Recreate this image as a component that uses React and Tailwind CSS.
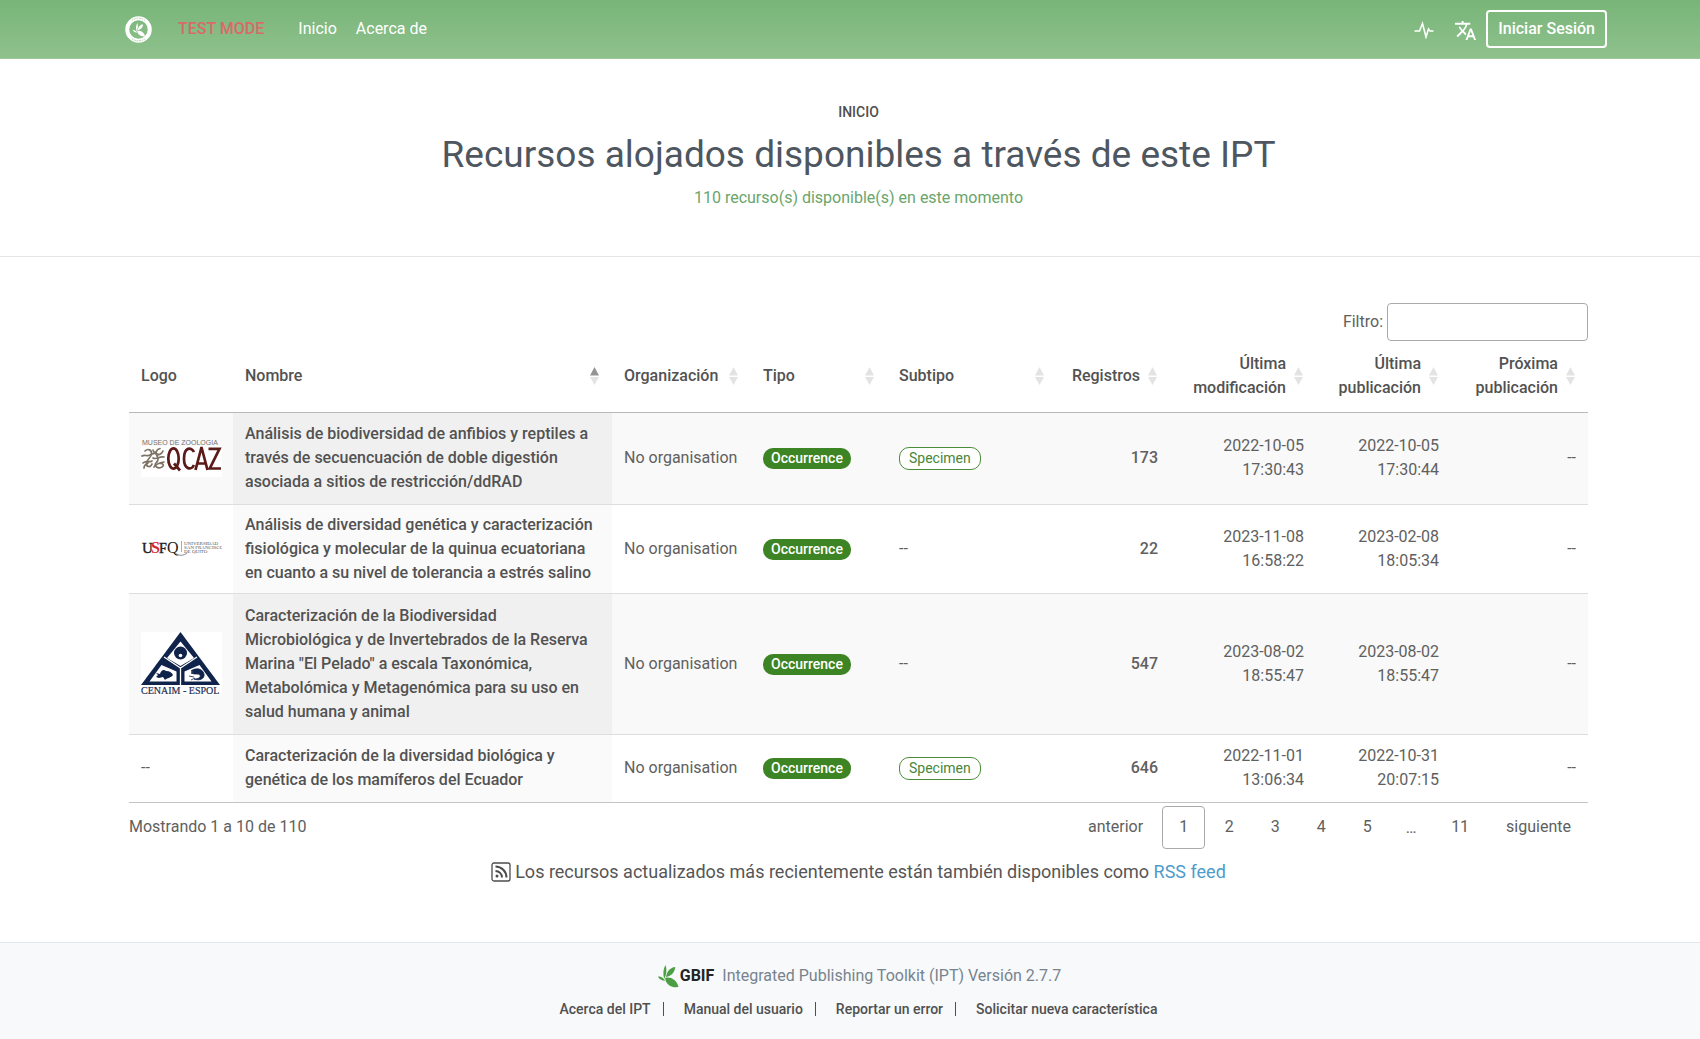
import React from "react";
import { MdTranslate } from "react-icons/md";

const leaf = (
  <>
    <path d="M8.500 1C6 5 5.500 10 7 15.500 9.500 11.500 10 6 8.500 1Z" />
    <path d="M18.500 3C13.500 3.500 9.500 7.500 9 13.500 14.500 12.500 18 8.500 18.500 3Z" />
    <path d="M0.500 13C3 12.500 6 14 8.200 17.500 5 17.500 2 16 0.500 13Z" />
    <path d="M8 14.500C13.500 13 20.500 16.500 21.800 24 15 25 8.500 21.500 8 14.500Z" />
  </>
);

function SiteLogo() {
  return (
    <svg viewBox="0 0 54 54" className="h-[27px] w-[27px]" aria-label="IPT">
      <circle cx="27" cy="27" r="22.500" fill="none" stroke="#fff" strokeWidth="8" />
      <path d="M14 8.500A22.500 22.500 0 0 1 40 8.500M14 45.500A22.500 22.500 0 0 0 40 45.500" fill="none" stroke="#a5cda4" strokeWidth="2" strokeDasharray="3 2" />
      <g fill="#fff" transform="translate(15 13) scale(1.150)">{leaf}</g>
    </svg>
  );
}

function QcazLogo() {
  return (
    <svg viewBox="0 0 81 38" className="h-[38px] w-[81px]" fontFamily="'Liberation Sans', sans-serif">
      <rect y="7" width="81" height="31" fill="#fff" />
      <text x="1" y="6" fontSize="7" fill="#77706a">MUSEO DE ZOOLOGIA</text>
      <g fill="none" stroke="#7d7364" strokeWidth="1.700" strokeLinecap="round">
        <path d="M4 12c3-3 7-1 6.500 3S6 20 5.500 24s4 5 5.500 1" />
        <path d="M1 17c3-2 5 1 8-1s5-1 6-3M2 24c3-3 6 0 9-2M3 29c0-3 2-4 4-5" />
        <path d="M19 9.500c-4 1-5 5-3 7.500s1 5-1 7 1 6 5 4.500 2-5-1-4" />
        <path d="M12 19c4 2 6-2 11-1M13 28c2-3 4-4 10-5M22 12c-1 3-3 3-5 4M12 11c1 3 3 4 5 4" />
      </g>
      <g fill="none" stroke="#5c1a18" strokeWidth="2.700">
        <ellipse cx="32.500" cy="19.500" rx="5.200" ry="10.200" />
        <path d="M33 24.500l6 7M53 13C50.500 7.500 43 8 43 19.500s7.500 12 10 6.500M54.500 31L60.300 9h.4L66.500 31M56.500 24.500h8M67.500 9.800h11L68.800 29.500h11.200" />
      </g>
    </svg>
  );
}

function UsfqLogo() {
  return (
    <svg viewBox="0 0 81 18" className="h-[18px] w-[81px]" fontFamily="'Liberation Serif', serif">
      <text x="1" y="13" fontSize="15" fill="#222" stroke="#222" strokeWidth="0.400">U</text>
      <text x="10" y="13" fontSize="16" fontWeight="bold" fill="#dc2630">S</text>
      <text x="18" y="13" fontSize="14" fill="#222" stroke="#222" strokeWidth="0.400">F</text>
      <text x="26" y="13" fontSize="16" fill="#222">Q</text>
      <path d="M34 13c3 3 9 3 12 0" stroke="#8a8a8a" fill="none" />
      <path d="M40.500 1v11" stroke="#c9a0a0" fill="none" />
      <g fontSize="5" fill="#555">
        <text x="43" y="5">UNIVERSIDAD</text>
        <text x="43" y="9">SAN FRANCISCO</text>
        <text x="43" y="13">DE QUITO</text>
      </g>
    </svg>
  );
}

function CenaimLogo() {
  return (
    <svg viewBox="0 0 81 63" className="h-[63px] w-[81px]">
      <rect width="81" height="63" fill="#fff" />
      <path d="M39.500 0L79 53H0Z" fill="#10234a" />
      <path d="M39.500 36v17M39.500 36L23 25M39.500 36L56 25" stroke="#fff" strokeWidth="1.300" />
      <g fill="#fff">
        <path d="M39.500 9.500L53 26 39.500 34 26 26Z" />
        <path d="M20.500 33L35.500 39.500V49.500H8.500Z" />
        <path d="M58.500 33L43.500 39.500V49.500H70.500Z" />
      </g>
      <circle cx="39.500" cy="21" r="6.500" fill="#10234a" />
      <circle cx="39.500" cy="23.500" r="1.800" fill="#fff" />
      <path d="M15 41l4 1c1-4 4-5 6-3 4 0 6 2 7 4-2 3-6 3-8 5l-2-3-4 1-3-1 2-2Z" fill="#10234a" />
      <path d="M50 39c5-4 12-2 13 3s-5 7-10 5c5 0 7-2 6-4s-5 0-9-2l3-1ZM48 44l5 1M50 48l4-2" fill="#10234a" stroke="#10234a" strokeWidth="0.800" />
      <text x="0" y="62" fontSize="10" fontFamily="'Liberation Serif', serif" fill="#222e50" stroke="#222e50" strokeWidth="0.200">CENAIM - ESPOL</text>
    </svg>
  );
}

function SortArrows({ active }) {
  return (
    <svg viewBox="0 0 9 18" className="h-[18px] w-[9px] shrink-0" aria-hidden="true">
      <path d="M4.500 0L9 8.500H0Z" fill={active ? "#929496" : "#e3e3e3"} />
      <path d="M0 10h9L4.500 18Z" fill="#e3e3e3" />
    </svg>
  );
}

const columns = [
  { lines: ["Nombre"], active: true },
  { lines: ["Organización"] },
  { lines: ["Tipo"] },
  { lines: ["Subtipo"] },
  { lines: ["Registros"], right: true },
  { lines: ["Última", "modificación"], right: true },
  { lines: ["Última", "publicación"], right: true },
  { lines: ["Próxima", "publicación"], right: true },
];

const rows = [
  {
    logo: <QcazLogo />,
    name: "Análisis de biodiversidad de anfibios y reptiles a través de secuencuación de doble digestión asociada a sitios de restricción/ddRAD",
    subtype: "Specimen",
    records: "173",
    modified: ["2022-10-05", "17:30:43"],
    published: ["2022-10-05", "17:30:44"],
    height: "h-[92px]",
  },
  {
    logo: <UsfqLogo />,
    name: "Análisis de diversidad genética y caracterización fisiológica y molecular de la quinua ecuatoriana en cuanto a su nivel de tolerancia a estrés salino",
    records: "22",
    modified: ["2023-11-08", "16:58:22"],
    published: ["2023-02-08", "18:05:34"],
    height: "h-[89px]",
  },
  {
    logo: <CenaimLogo />,
    name: 'Caracterización de la Biodiversidad Microbiológica y de Invertebrados de la Reserva Marina "El Pelado" a escala Taxonómica, Metabolómica y Metagenómica para su uso en salud humana y animal',
    records: "547",
    modified: ["2023-08-02", "18:55:47"],
    published: ["2023-08-02", "18:55:47"],
    height: "h-[141px]",
  },
  {
    name: "Caracterización de la diversidad biológica y genética de los mamíferos del Ecuador",
    subtype: "Specimen",
    records: "646",
    modified: ["2022-11-01", "13:06:34"],
    published: ["2022-10-31", "20:07:15"],
    height: "h-[68px]",
  },
];

const footerLinks = ["Acerca del IPT", "Manual del usuario", "Reportar un error", "Solicitar nueva característica"];

function Stamp({ value }) {
  return (
    <td className="pr-3 text-right">
      {value[0]}
      <br />
      {value[1]}
    </td>
  );
}

export default function App() {
  return (
    <div className="flex min-h-screen flex-col bg-white font-['Roboto',sans-serif] text-base leading-6 text-[#4e565f]">
      <header className="border-b border-[#9bc99a] bg-linear-to-b from-[#78b578] to-[#8fc18d] pr-[93px] pl-[125px] text-white">
        <div className="flex h-[58px] items-center">
          <a href="#inicio"><SiteLogo /></a>
          <span className="ml-[26px] font-medium text-[#d9696a]">TEST MODE</span>
          <nav className="ml-[34px] flex gap-[19px]">
            <a href="#inicio">Inicio</a>
            <a href="#acerca">Acerca de</a>
          </nav>
          <div className="ml-auto flex items-center">
            <button aria-label="Estado" className="mr-5 pt-0.5">
              <svg viewBox="0 0 20 18" className="h-[18px] w-5" fill="none" stroke="#fff" strokeWidth="1.600">
                <path d="M0.500 10h5l3-7.500 3.500 13.500 2.500-8 1.500 2H19.500" />
              </svg>
            </button>
            <button aria-label="Idioma" className="mr-[9px] pt-0.5"><MdTranslate size={23} /></button>
            <button className="h-[38px] rounded border-2 border-white px-2.5 font-medium">Iniciar Sesión</button>
          </div>
        </div>
      </header>

      <section className="border-b border-[#e3e5e7] pt-[43px] pb-[46px] pl-[17px] text-center">
        <p className="text-sm leading-5 font-medium text-[#4f4f4f]">INICIO</p>
        <h1 className="mt-2.5 text-[37px] leading-[46px] text-[#4e565f]">Recursos alojados disponibles a través de este IPT</h1>
        <p className="mt-2 text-[#6aa56a]">110 recurso(s) disponible(s) en este momento</p>
      </section>

      <main className="grow pt-[46px] pr-28 pl-[129px] text-[#606060]">
        <div className="flex items-center justify-end gap-1">
          <label htmlFor="filtro">Filtro:</label>
          <input id="filtro" type="text" className="h-[38px] w-[201px] rounded border border-[#aaa] bg-white px-2" />
        </div>

        <table className="w-full table-fixed border-collapse">
          <colgroup>
            <col className="w-[104px]" />
            <col className="w-[379px]" />
            <col className="w-[139px]" />
            <col className="w-[136px]" />
            <col className="w-[170px]" />
            <col className="w-[113px]" />
            <col className="w-[146px]" />
            <col className="w-[135px]" />
            <col />
          </colgroup>
          <thead>
            <tr className="h-[71px] border-b border-[#b9b9b9] text-left text-[#525252]">
              <th className="pl-3 font-medium">Logo</th>
              {columns.map((c, i) => (
                <th key={i} className="pr-[13px] pl-3 font-medium">
                  <span className={c.right ? "flex items-center justify-end gap-2" : "flex items-center justify-between"}>
                    <span className={c.right ? "text-right" : ""}>
                      {c.lines.map((l) => <span key={l} className="block">{l}</span>)}
                    </span>
                    <SortArrows active={c.active} />
                  </span>
                </th>
              ))}
            </tr>
          </thead>
          <tbody>
            {rows.map((r, i) => (
              <tr key={i} className={`${r.height} ${i % 2 ? "bg-white" : "bg-[#f9f9f9]"} border-b ${i === 3 ? "border-[#c4c4c4]" : "border-[#dedede]"}`}>
                <td className="pl-3">{r.logo || "--"}</td>
                <td className={`${i % 2 ? "bg-[#fafafa]" : "bg-[#f0f0f0]"} pr-3 pl-3`}>
                  <a href="#recurso" className="font-medium text-[#525252]">{r.name}</a>
                </td>
                <td className="pl-3">No organisation</td>
                <td className="pl-3">
                  <span className="inline-block rounded-[10px] bg-[#3d8425] px-2 text-sm leading-[21px] font-medium text-white">Occurrence</span>
                </td>
                <td className="pl-3">
                  {r.subtype ? (
                    <span className="inline-block rounded-[10px] border border-[#4a8c3a] bg-white px-[9px] text-sm leading-[21px] text-[#4a8638]">{r.subtype}</span>
                  ) : "--"}
                </td>
                <td className="pr-3 text-right font-medium">{r.records}</td>
                <Stamp value={r.modified} />
                <Stamp value={r.published} />
                <td className="pr-3 text-right">--</td>
              </tr>
            ))}
          </tbody>
        </table>

        <div className="flex items-start justify-between">
          <p className="pt-3">Mostrando 1 a 10 de 110</p>
          <nav className="flex gap-0.5 pt-[3px]">
            <button className="h-[43px] px-[17px]">anterior</button>
            <button className="h-[43px] w-[43px] rounded border border-[#aaa]">1</button>
            {["2", "3", "4", "5"].map((n) => <button key={n} className="h-[43px] w-11">{n}</button>)}
            <span className="w-10 text-center leading-[43px]">…</span>
            <button className="h-[43px] px-[18px]">11</button>
            <button className="h-[43px] px-[17px]">siguiente</button>
          </nav>
        </div>

        <p className="mt-[9px] flex items-center justify-center gap-1 text-lg leading-7 text-[#565656]">
          <svg viewBox="0 0 20 20" className="h-5 w-5" fill="none" stroke="#4c4c4c" aria-hidden="true">
            <rect x="1" y="1" width="18" height="18" rx="2" strokeWidth="1.300" />
            <path d="M4.500 9a6.500 6.500 0 0 1 6.500 6.500M4.500 4.500a11 11 0 0 1 11 11" strokeWidth="2" />
            <circle cx="6" cy="14" r="1.500" fill="#4c4c4c" stroke="none" />
          </svg>
          <span>Los recursos actualizados más recientemente están también disponibles como <a href="#rss" className="text-[#4e9ccb]">RSS feed</a></span>
        </p>
      </main>

      <footer className="h-[97px] border-t border-[#e4e7ea] bg-[#f7f9fb] pt-[21px] pl-[17px] text-[#78838e]">
        <div className="flex items-center justify-center">
          <svg viewBox="0 0 22 25" className="h-6 w-6" fill="#4c9e45" aria-hidden="true">{leaf}</svg>
          <span className="font-bold text-[#242424]">GBIF</span>
          <span className="ml-2">Integrated Publishing Toolkit (IPT) Versión 2.7.7</span>
        </div>
        <ul className="mt-[11px] flex justify-center text-sm font-medium text-[#505050]">
          {footerLinks.map((l, i) => (
            <li key={l} className={i ? "ml-5 flex" : "flex"}>
              <a href="#enlace">{l}</a>
              {i < 3 && <span className="ml-3 h-3.5 w-px self-center bg-[#505050]" />}
            </li>
          ))}
        </ul>
      </footer>
    </div>
  );
}
